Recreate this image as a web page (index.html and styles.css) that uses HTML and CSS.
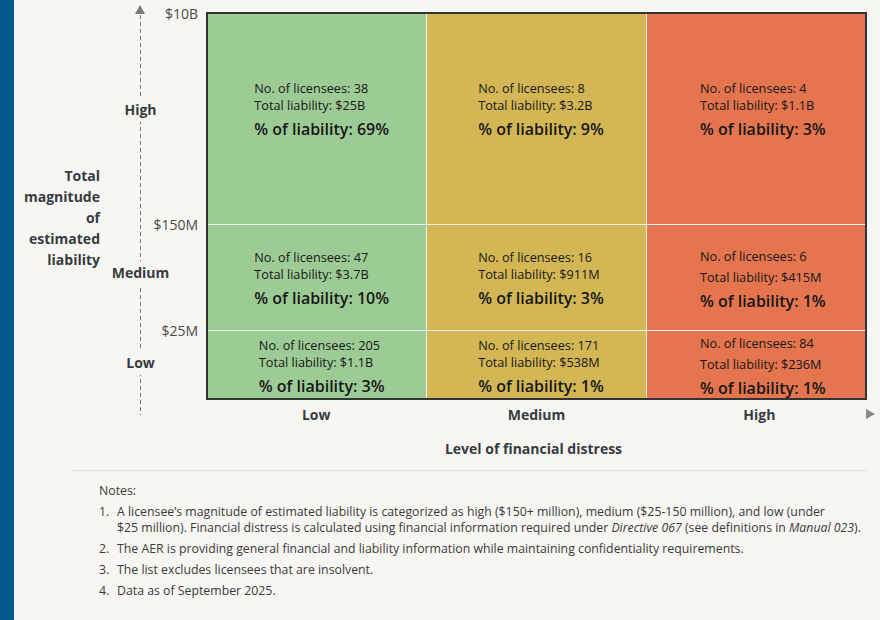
FILE: index.html
```html
<!DOCTYPE html>
<html lang="en">
<head>
<meta charset="utf-8">
<title>Licensee liability matrix</title>
<link rel="stylesheet" href="styles.css">
</head>
<body>
<div class="page">
  <div class="brand-bar"></div>
  <main class="content">
    <section class="chart">
      <div class="ytitle">Total magnitude of estimated liability</div>
      <div class="yaxis">
        <div class="yrow r-high"><span class="tick">$10B</span><span class="cat">High</span></div>
        <div class="yrow r-med"><span class="tick">$150M</span><span class="cat">Medium</span></div>
        <div class="yrow r-low"><span class="tick">$25M</span><span class="cat">Low</span></div>
      </div>
      <div class="matrix">
        <div class="cell green top"><div class="stat"><div class="line">No. of licensees: 38</div><div class="line">Total liability: $25B</div><div class="pct">% of liability: 69%</div></div></div>
        <div class="cell yellow top"><div class="stat"><div class="line">No. of licensees: 8</div><div class="line">Total liability: $3.2B</div><div class="pct">% of liability: 9%</div></div></div>
        <div class="cell orange top"><div class="stat"><div class="line">No. of licensees: 4</div><div class="line">Total liability: $1.1B</div><div class="pct">% of liability: 3%</div></div></div>

        <div class="cell green mid"><div class="stat"><div class="line">No. of licensees: 47</div><div class="line">Total liability: $3.7B</div><div class="pct">% of liability: 10%</div></div></div>
        <div class="cell yellow mid"><div class="stat"><div class="line">No. of licensees: 16</div><div class="line">Total liability: $911M</div><div class="pct">% of liability: 3%</div></div></div>
        <div class="cell orange mid"><div class="stat loose"><div class="line">No. of licensees: 6</div><div class="line">Total liability: $415M</div><div class="pct">% of liability: 1%</div></div></div>

        <div class="cell green low"><div class="stat"><div class="line">No. of licensees: 205</div><div class="line">Total liability: $1.1B</div><div class="pct">% of liability: 3%</div></div></div>
        <div class="cell yellow low"><div class="stat"><div class="line">No. of licensees: 171</div><div class="line">Total liability: $538M</div><div class="pct">% of liability: 1%</div></div></div>
        <div class="cell orange low low-tight"><div class="stat loose"><div class="line">No. of licensees: 84</div><div class="line">Total liability: $236M</div><div class="pct">% of liability: 1%</div></div></div>
      </div>
      <div class="xaxis">
        <span class="xcat">Low</span>
        <span class="xcat">Medium</span>
        <span class="xcat">High</span>
      </div>
      <div class="xtitle">Level of financial distress</div>
    </section>

    <section class="notes">
      <p class="notes-title">Notes:</p>
      <ol class="notes-list">
        <li><span>A licensee’s magnitude of estimated liability is categorized as high ($150+ million), medium ($25-150 million), and low (under $25&nbsp;million). Financial distress is calculated using financial information required under <em>Directive 067</em> (see definitions in <em>Manual&nbsp;023</em>).</span></li>
        <li><span>The AER is providing general financial and liability information while maintaining confidentiality requirements.</span></li>
        <li><span>The list excludes licensees that are insolvent.</span></li>
        <li><span>Data as of September 2025.</span></li>
      </ol>
    </section>
  </main>
</div>
</body>
</html>
```

FILE: styles.css
```css
* {
  box-sizing: border-box;
}

body {
  margin: 0;
  background: #f8f6f3;
  font-family: "Open Sans", "Noto Sans", "Liberation Sans", sans-serif;
  color: #3a3f45;
}

.page {
  display: flex;
  min-height: 620px;
}

.brand-bar {
  flex: none;
  width: 14px;
  background: #03598b;
}

.content {
  flex: 1;
  padding: 12px 12px 0 0;
}

/* ---------- chart ---------- */
.chart {
  display: grid;
  grid-template-columns: 86px 106px 661px;
}

.ytitle {
  grid-column: 1;
  grid-row: 1;
  align-self: center;
  margin-top: 22px;
  text-align: right;
  font-size: 14px;
  font-weight: 700;
  line-height: 21px;
  color: #363b41;
}

.yaxis {
  grid-column: 2;
  grid-row: 1;
  position: relative;
  display: grid;
  grid-template-rows: 210px 105px 67px;
  row-gap: 1px;
  padding-top: 2px;
}

.yaxis::before {
  content: "";
  position: absolute;
  left: 40px;
  top: 3px;
  bottom: -15px;
  width: 1px;
  background: repeating-linear-gradient(to bottom, #777 0 4px, transparent 4px 7px);
}

.yaxis::after {
  content: "";
  position: absolute;
  left: 35px;
  top: -7px;
  border-left: 5px solid transparent;
  border-right: 5px solid transparent;
  border-bottom: 9px solid #7b7b7b;
}

.yrow {
  position: relative;
  display: grid;
  grid-template-columns: 81px;
  justify-items: center;
  align-items: center;
}

.r-high { padding-bottom: 18px; }
.r-med { padding-bottom: 9px; }
.r-low { padding-bottom: 3px; }

.cat {
  position: relative;
  z-index: 1;
  background: #f8f6f3;
  padding: 3px 0;
  font-size: 14px;
  font-weight: 700;
  line-height: 18px;
  color: #363b41;
}

.tick {
  position: absolute;
  right: 8px;
  top: -9px;
  font-size: 14px;
  line-height: 18px;
  color: #4a4a4a;
}

.matrix {
  grid-column: 3;
  grid-row: 1;
  display: grid;
  grid-template-columns: repeat(3, 1fr);
  grid-template-rows: 210px 105px 67px;
  gap: 1px;
  background: #f4f2ec;
  border: 2px solid #333;
}

.cell {
  display: flex;
  align-items: center;
  justify-content: center;
  padding-left: 9px;
  color: #161616;
}

.cell.orange { padding-left: 14px; }
.cell.top { padding-bottom: 20px; }
.cell.mid { padding-top: 2px; }
.cell.low { padding-top: 4px; }
.cell.low-tight {
  align-items: flex-start;
  padding-top: 2px;
}

.green { background: #9dcb95; }
.yellow { background: #d3b754; }
.orange { background: #e4754f; }

.stat .line {
  font-size: 12.7px;
  line-height: 17px;
}

.stat .pct {
  margin-top: 5px;
  font-size: 16px;
  font-weight: 600;
  line-height: 20px;
}

.stat.loose .line {
  line-height: 21px;
}

.stat.loose .pct {
  margin-top: 3px;
}

.xaxis {
  grid-column: 3;
  grid-row: 2;
  position: relative;
  display: grid;
  grid-template-columns: repeat(3, 1fr);
  margin-top: 6px;
  text-align: center;
  font-size: 14px;
  font-weight: 700;
  line-height: 18px;
  color: #363b41;
}

.xcat:last-child { padding-left: 5px; }

.xaxis::after {
  content: "";
  position: absolute;
  right: -8px;
  top: 3px;
  border-top: 5px solid transparent;
  border-bottom: 5px solid transparent;
  border-left: 9px solid #8a8a8a;
}

.xtitle {
  grid-column: 3;
  grid-row: 3;
  margin-top: 15px;
  padding-right: 6px;
  text-align: center;
  font-size: 14px;
  font-weight: 700;
  line-height: 20px;
  color: #363b41;
}

/* ---------- notes ---------- */
.notes {
  margin: 11px 0 0 59px;
  padding: 12px 0 0 26px;
  border-top: 1px dotted #cfcfcf;
  font-size: 12.3px;
  line-height: 16px;
  color: #3a3a3a;
}

.notes-title {
  margin: 0 0 5px;
}

.notes-list {
  margin: 0;
  padding: 0;
  list-style: none;
  counter-reset: note;
}

.notes-list li {
  counter-increment: note;
  display: grid;
  grid-template-columns: 18px 1fr;
  margin-bottom: 5px;
}

.notes-list li::before {
  content: counter(note) ".";
}
```
